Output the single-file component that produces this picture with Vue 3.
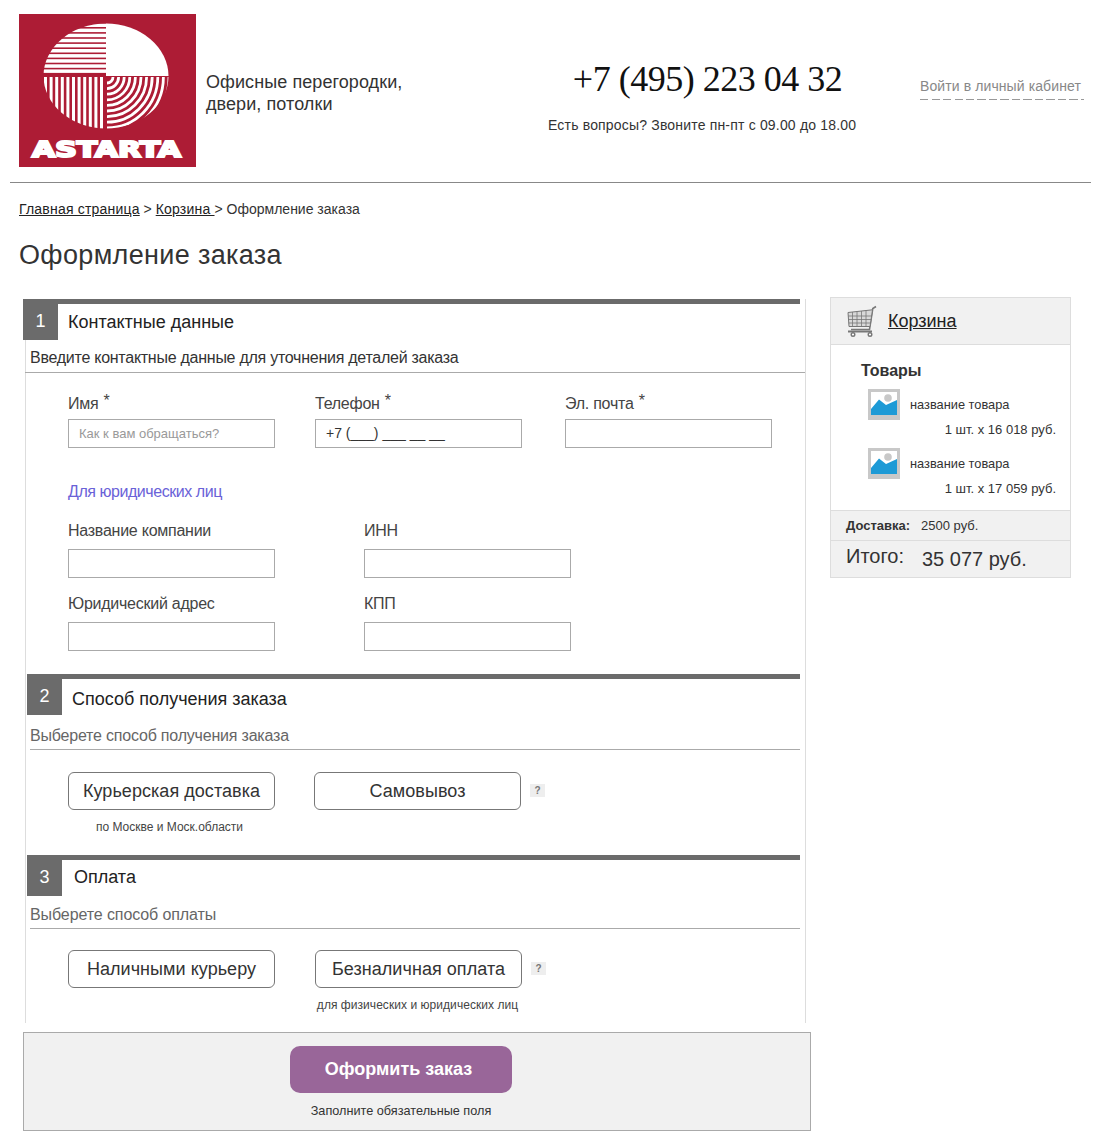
<script setup>
const stripesH = Array.from({ length: 10 }, (_, i) => 9.5 + i * 5.1)
const stripesV = Array.from({ length: 11 }, (_, i) => 25 + i * 5.6)
const arcs = Array.from({ length: 11 }, (_, i) => 6 + i * 5.6)
const goods = [
  { name: 'название товара', qty: '1 шт. х 16 018 руб.' },
  { name: 'название товара', qty: '1 шт. х 17 059 руб.' }
]
</script>

<template>
  <div class="page">
    <header class="header">
      <svg class="logo" width="177" height="153" viewBox="0 0 177 153">
        <defs>
          <clipPath id="oval"><ellipse cx="87" cy="62" rx="62.5" ry="52.5" /></clipPath>
        </defs>
        <rect width="177" height="153" fill="#ad1c35" />
        <g clip-path="url(#oval)">
          <rect x="87" y="9" width="63" height="53" fill="#fff" />
          <rect v-for="y in stripesH" :key="y" x="24" :y="y" width="63" height="3.5" fill="#fff" />
          <rect v-for="x in stripesV" :key="x" :x="x" y="63" width="3" height="52" fill="#fff" />
          <g fill="none" stroke="#fff" stroke-width="2.8">
            <path v-for="r in arcs" :key="r" :d="`M${88 + r} 63 A${r} ${r} 0 0 1 88 ${63 + r}`" />
          </g>
        </g>
        <text class="wordmark" x="13" y="143" textLength="149" lengthAdjust="spacingAndGlyphs">ASTARTA</text>
      </svg>
      <div class="tagline">Офисные перегородки,<br />двери, потолки</div>
      <div class="contact">
        <div class="phone">+7 (495) 223 04 32</div>
        <div class="hours">Есть вопросы? Звоните пн-пт с 09.00 до 18.00</div>
      </div>
      <a class="login">Войти в личный кабинет</a>
    </header>

    <nav class="crumbs">
      <a>Главная страница</a> &gt; <a>Корзина </a> &gt; Оформление заказа
    </nav>
    <h1 class="title">Оформление заказа</h1>

    <div class="layout">
      <main class="order">
        <div class="form">
          <section class="sec sec-first">
            <div class="sec-head">
              <span class="num">1</span><span class="sec-name">Контактные данные</span>
            </div>
            <div class="sec-desc dark">Введите контактные данные для уточнения деталей заказа</div>
            <div class="row row-contacts">
              <label class="field"><span class="lbl">Имя <sup>*</sup></span><input class="inp" placeholder="Как к вам обращаться?" /></label>
              <label class="field f-phone"><span class="lbl">Телефон <sup>*</sup></span><input class="inp" value="+7 (___) ___ __ __" /></label>
              <label class="field f-mail"><span class="lbl">Эл. почта <sup>*</sup></span><input class="inp" /></label>
            </div>
            <a class="legal">Для юридических лиц</a>
            <div class="row row-company">
              <label class="field"><span class="lbl">Название компании</span><input class="inp" /></label>
              <label class="field f-inn"><span class="lbl">ИНН</span><input class="inp" /></label>
            </div>
            <div class="row row-address">
              <label class="field"><span class="lbl">Юридический адрес</span><input class="inp" /></label>
              <label class="field f-inn"><span class="lbl">КПП</span><input class="inp" /></label>
            </div>
          </section>

          <section class="sec sec-second">
            <div class="sec-head">
              <span class="num">2</span><span class="sec-name">Способ получения заказа</span>
            </div>
            <div class="sec-desc">Выберете способ получения заказа</div>
            <div class="choices">
              <div class="choice">
                <button class="opt">Курьерская доставка</button>
                <div class="note note-city">по Москве и Моск.области</div>
              </div>
              <div class="choice c-second">
                <button class="opt">Самовывоз</button>
              </div>
              <span class="hint">?</span>
            </div>
          </section>

          <section class="sec sec-third">
            <div class="sec-head">
              <span class="num">3</span><span class="sec-name pay">Оплата</span>
            </div>
            <div class="sec-desc">Выберете способ оплаты</div>
            <div class="choices pay-choices">
              <div class="choice">
                <button class="opt">Наличными курьеру</button>
              </div>
              <div class="choice c-cash">
                <button class="opt">Безналичная оплата</button>
                <div class="note note-legal">для физических и юридических лиц</div>
              </div>
              <span class="hint">?</span>
            </div>
          </section>
        </div>

        <div class="submit">
          <button class="go">Оформить заказ</button>
          <div class="submit-note">Заполните обязательные поля</div>
        </div>
      </main>

      <aside class="cart">
        <div class="cart-head">
          <svg width="32" height="33" viewBox="0 0 32 33" fill="none" stroke="#777">
            <path d="M30 1.500 L26.800 3.500 L23.500 24.500 H5" stroke-width="1.600" />
            <path d="M2 7.500 L26.500 4.800 L24 21.500 H3 Z" fill="#d8d8d8" stroke-width="1" />
            <path d="M2.200 11 H26 M2.400 14.500 H25.400 M2.700 18 H24.800 M6.500 7 V21.500 M11 6.500 V21.500 M15.500 6 V21.500 M20 5.500 V21.500" stroke-width=".8" />
            <path d="M2 26.500 H26" stroke-width="2" />
            <circle cx="7" cy="29.500" r="1.800" fill="#fff" stroke-width="1.400" />
            <circle cx="24" cy="29.500" r="1.800" fill="#fff" stroke-width="1.400" />
          </svg>
          <a class="cart-link">Корзина</a>
        </div>
        <div class="cart-body">
          <div class="goods-title">Товары</div>
          <div v-for="(g, i) in goods" :key="i" class="good">
            <div class="good-top">
              <svg width="32" height="31" viewBox="0 0 32 31">
                <rect width="32" height="31" fill="#c8c8c8" />
                <rect x="3" y="3" width="26" height="23" fill="#fff" />
                <circle cx="20" cy="9" r="3.800" fill="#c8c8c8" />
                <path d="M3 26 V20 L11 10.500 L18 16 L29 11 V26 Z" fill="#1d9ad6" />
              </svg>
              <span class="good-name">{{ g.name }}</span>
            </div>
            <div class="good-qty">{{ g.qty }}</div>
          </div>
        </div>
        <div class="cart-ship"><b>Доставка:</b><span>2500 руб.</span></div>
        <div class="cart-total"><span class="t-label">Итого:</span><span class="t-sum">35 077 руб.</span></div>
      </aside>
    </div>
  </div>
</template>

<style>
html, body { margin: 0; background: #fff; }
</style>

<style scoped>
.page {
  width: 1100px;
  height: 1140px;
  overflow: hidden;
  font-family: "Liberation Sans", Arial, sans-serif;
  color: #333;
  box-sizing: border-box;
}
.header {
  display: flex;
  margin: 0 9px 0 10px;
  padding: 14px 0 0 9px;
  height: 168px;
  border-bottom: 1px solid #888;
}
.logo { flex: none; display: block; }
.wordmark {
  font-family: "DejaVu Sans", sans-serif;
  font-weight: 700;
  font-size: 21px;
  fill: #fff;
  stroke: #fff;
  stroke-width: 2px;
}
.tagline {
  margin: 57px 0 0 10px;
  width: 320px;
  font-size: 18px;
  line-height: 22px;
  letter-spacing: .08px;
  flex: none;
}
.contact {
  margin-top: 42px;
  width: 308px;
  margin-left: 22px;
  text-align: center;
  flex: none;
}
.phone {
  padding-left: 11px;
  font-family: "Liberation Serif", serif;
  font-size: 36px;
  line-height: 46px;
  letter-spacing: -.5px;
  color: #111;
}
.hours { margin-top: 14px; font-size: 14px; line-height: 18px; letter-spacing: .18px; white-space: nowrap; }
.login {
  flex: none;
  margin: 63px 0 0 64px;
  width: 164px;
  height: 23px;
  font-size: 14px;
  line-height: 18px;
  letter-spacing: .1px;
  color: #888;
  box-sizing: border-box;
  background: repeating-linear-gradient(90deg, #999 0 8px, transparent 8px 11.500px) left bottom / 100% 1px no-repeat;
}
.crumbs {
  margin: 17px 0 0 19px;
  font-size: 14px;
  line-height: 18px;
}
.crumbs a { text-decoration: underline; color: #222; letter-spacing: .2px; }
.title {
  margin: 19px 0 0 19px;
  font-size: 27px;
  line-height: 36px;
  letter-spacing: .35px;
  font-weight: 400;
}
.layout {
  display: flex;
  margin: 24px 0 0 23px;
  align-items: flex-start;
}
.order { width: 788px; flex: none; margin-top: 2px; }
.form {
  margin: 11px 0 0 2px;
  width: 781px;
  box-sizing: border-box;
  height: 724px;
  border-left: 1px solid #ddd;
  border-right: 1px solid #ddd;
}
.sec-first { margin: -11px 0 0 -3px; height: 375px; }
.sec-second { margin-left: 1px; height: 181px; }
.sec-third { margin-left: 1px; }
.sec-head {
  display: flex;
  border-top: 5px solid #6b6b6b;
  width: 777px;
  background: #fff;
  box-sizing: border-box;
}
.sec-second .sec-head, .sec-third .sec-head { width: 773px; }
.num {
  width: 35px;
  height: 36px;
  background: #6b6b6b;
  color: #fff;
  font-size: 18px;
  line-height: 34px;
  text-align: center;
  flex: none;
}
.sec-name { margin-left: 10px; font-size: 18px; line-height: 36px; color: #222; }
.sec-second .sec-name { padding-top: 2px; }
.sec-name.pay { margin-left: 12px; line-height: 34px; }
.sec-desc {
  margin-left: 3px;
  width: 770px;
  font-size: 16px;
  color: #666;
  border-bottom: 1px solid #aaa;
}
.sec-first .sec-desc { color: #333; margin-left: 2px; padding-left: 5px; width: 775px; height: 32px; line-height: 35px; letter-spacing: -.26px; }
.sec-second .sec-desc { height: 32px; line-height: 37px; letter-spacing: -.2px; }
.sec-third .sec-desc { height: 32px; line-height: 37px; letter-spacing: -.1px; }
.row { display: flex; padding-left: 45px; }
.row-contacts { margin-top: 21px; }
.row-company { margin-top: 19px; }
.row-address { margin-top: 16px; }
.field { display: flex; flex-direction: column; width: 207px; flex: none; }
.f-phone { margin-left: 40px; }
.f-mail { margin-left: 43px; }
.f-inn { margin-left: 89px; }
.lbl { font-size: 16px; line-height: 20px; height: 20px; letter-spacing: -.25px; color: #444; margin-bottom: 8px; }
.row-contacts .lbl { margin-bottom: 5px; }
.lbl sup { font-size: 16px; line-height: 0; vertical-align: 3px; margin-left: 1px; }
.inp {
  display: block;
  width: 207px;
  height: 29px;
  box-sizing: border-box;
  border: 1px solid #aaa;
  padding: 0 10px 2px;
  background: #fff;
  font-family: inherit;
  font-size: 14px;
  color: #333;
  outline: none;
  border-radius: 0;
}
.inp::placeholder { font-size: 13px; color: #999; opacity: 1; }
.legal {
  display: block;
  margin: 34px 0 0 45px;
  height: 20px;
  font-size: 16px;
  line-height: 20px;
  letter-spacing: -.45px;
  color: #6a62d8;
}
.choices { display: flex; align-items: flex-start; padding: 22px 0 0 41px; }
.pay-choices { padding-top: 21px; }
.choice { width: 207px; flex: none; text-align: center; }
.c-second { margin-left: 39px; }
.c-cash { margin-left: 40px; }
.opt {
  display: block;
  width: 207px;
  height: 38px;
  box-sizing: border-box;
  padding: 0;
  border: 1px solid #777;
  border-radius: 6px;
  background: #fff;
  font-family: inherit;
  font-size: 18px;
  letter-spacing: .05px;
  color: #333;
}
.note { margin-top: 9px; font-size: 12px; line-height: 16px; color: #444; }
.note-city { padding-right: 4px; }
.note-legal { padding-right: 2px; letter-spacing: .05px; }
.hint {
  margin: 12px 0 0 9px;
  width: 15px;
  height: 13px;
  background: #eee;
  font-size: 10px;
  font-weight: 700;
  line-height: 13px;
  text-align: center;
  color: #777;
  flex: none;
}
.submit {
  margin-top: 9px;
  width: 788px;
  height: 99px;
  box-sizing: border-box;
  background: #f1f1f1;
  border: 1px solid #aaa;
  padding-top: 13px;
}
.go {
  display: block;
  margin: 0 0 0 266px;
  width: 222px;
  height: 47px;
  padding: 0 5px 0 0;
  border: 0;
  border-radius: 10px;
  background: #996699;
  color: #fff;
  font-family: inherit;
  font-weight: 700;
  font-size: 18px;
}
.submit-note {
  margin: 10px 0 0 266px;
  width: 222px;
  text-align: center;
  font-size: 12.700px;
  line-height: 16px;
  color: #333;
  white-space: nowrap;
}
.cart {
  margin-left: 19px;
  width: 241px;
  height: 281px;
  box-sizing: border-box;
  border: 1px solid #ddd;
  flex: none;
}
.cart-head {
  display: flex;
  align-items: center;
  height: 47px;
  box-sizing: border-box;
  padding-left: 15px;
  background: #f1f1f1;
  border-bottom: 1px solid #ddd;
}
.cart-link { margin-left: 10px; font-size: 18px; text-decoration: underline; color: #222; }
.cart-body { height: 165px; padding: 16px 14px 0 30px; box-sizing: border-box; }
.goods-title { font-size: 16px; line-height: 20px; font-weight: 700; color: #333; }
.good { margin-top: 8px; }
.good + .good { margin-top: 10px; }
.good-top { display: flex; align-items: center; padding-left: 7px; }
.good-name { margin-left: 10px; font-size: 12.800px; color: #333; }
.good-qty { margin-top: 2px; text-align: right; font-size: 13px; line-height: 16px; color: #333; }
.cart-ship {
  height: 31px;
  box-sizing: border-box;
  padding-left: 15px;
  background: #f1f1f1;
  border-top: 1px solid #ddd;
  border-bottom: 1px solid #ddd;
  display: flex;
  align-items: center;
  font-size: 13px;
}
.cart-ship b { margin-right: 11px; }
.cart-total {
  display: flex;
  height: 36px;
  padding-left: 15px;
  background: #f1f1f1;
  color: #333;
}
.t-label { font-size: 20px; line-height: 31px; }
.t-sum { margin-left: 18px; font-size: 20px; line-height: 36px; }
</style>
